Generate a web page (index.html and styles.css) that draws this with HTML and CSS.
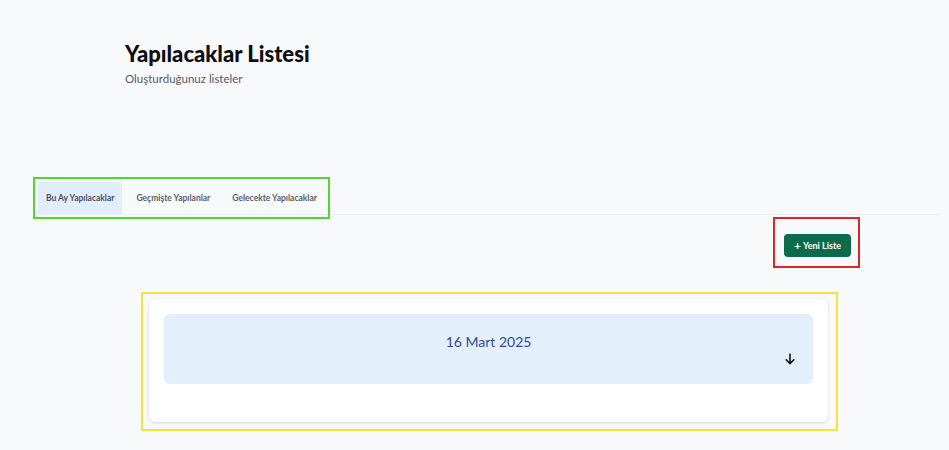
FILE: index.html
```html
<!DOCTYPE html>
<html lang="tr">
<head>
<meta charset="utf-8">
<title>Yapılacaklar Listesi</title>
<link rel="stylesheet" href="styles.css">
</head>
<body>
<div class="page">
  <header class="header">
    <h1 class="title">Yapılacaklar Listesi</h1>
    <p class="subtitle">Oluşturduğunuz listeler</p>
  </header>

  <nav class="tabs-row">
    <div class="tabs mark-green">
      <button class="tab tab-active">Bu Ay Yapılacaklar</button>
      <button class="tab">Geçmişte Yapılanlar</button>
      <button class="tab">Gelecekte Yapılacaklar</button>
    </div>
  </nav>

  <div class="actions">
    <div class="mark-red">
      <button class="btn-new"><span class="plus">+</span> Yeni Liste</button>
    </div>
  </div>

  <section class="list-wrap">
    <div class="mark-yellow">
      <div class="card">
        <div class="day-panel">
          <div class="day-title">16 Mart 2025</div>
          <div class="day-foot">
            <svg class="arrow" width="10" height="12" viewBox="0 0 10 12" aria-hidden="true">
              <path d="M5 1 V10.5 M1.2 6.8 L5 10.6 L8.8 6.8" fill="none" stroke="#111" stroke-width="1.6" stroke-linecap="round" stroke-linejoin="round"/>
            </svg>
          </div>
        </div>
      </div>
    </div>
  </section>
</div>
</body>
</html>
```

FILE: styles.css
```css
html, body {
  margin: 0;
  padding: 0;
  background: #f8f9fb;
}

body {
  font-family: Lato, "Open Sans", "Noto Sans", sans-serif;
  color: #111;
}

.page {
  padding-top: 40px;
  height: 450px;
  box-sizing: border-box;
}

.header {
  padding-left: 125px;
}

.title {
  margin: 0;
  font-size: 22px;
  line-height: 28px;
  font-weight: 900;
  color: #0d0d0d;
}

.subtitle {
  margin: 4px 0 0;
  font-size: 11.5px;
  line-height: 14px;
  color: #555b63;
}

.tabs-row {
  margin: 96px 9px 0 38px;
  border-bottom: 1px solid #eceef1;
  display: flex;
}

.tabs {
  display: flex;
  gap: 6px;
}

.mark-green {
  outline: 2px solid #52d636;
  outline-offset: 3px;
}

.tab {
  font-family: inherit;
  font-size: 8.5px;
  font-weight: 700;
  color: #5a5f66;
  background: transparent;
  border: 0;
  border-radius: 4px 4px 0 0;
  height: 32px;
  padding: 0 8px;
  cursor: pointer;
}

.tab-active {
  background: #e1edfb;
  color: #4a4f57;
}

.actions {
  display: flex;
  justify-content: flex-end;
  padding-right: 89px;
  margin-top: 2px;
}

.mark-red {
  display: flex;
  border: 2px solid #d9262b;
  padding: 15px 7px 9px 9px;
}

.btn-new {
  font-family: inherit;
  font-size: 9px;
  font-weight: 700;
  color: #fff;
  background: #0b6b4a;
  border: 0;
  border-radius: 4px;
  width: 67px;
  height: 23px;
  padding: 0;
  display: flex;
  align-items: center;
  justify-content: center;
  gap: 2px;
}

.plus {
  font-size: 12px;
  line-height: 1;
  font-weight: 700;
}

.list-wrap {
  padding: 24px 111px 0 141px;
}

.mark-yellow {
  border: 2px solid #f4e33a;
  padding: 5px 8px 7px 6px;
}

.card {
  background: #fff;
  border-radius: 6px;
  box-shadow: 0 1px 3px rgba(0, 0, 0, 0.12), 0 0 1px rgba(0, 0, 0, 0.08);
  padding: 15px 15px 38px;
}

.day-panel {
  background: #e3f0fc;
  border-radius: 6px;
  height: 70px;
  box-sizing: border-box;
  padding: 18px 18px 0;
}

.day-title {
  text-align: center;
  font-size: 14px;
  line-height: 20px;
  color: #2f4a94;
}

.day-foot {
  display: flex;
  justify-content: flex-end;
  margin-top: 1px;
}

.arrow {
  display: block;
}
```
